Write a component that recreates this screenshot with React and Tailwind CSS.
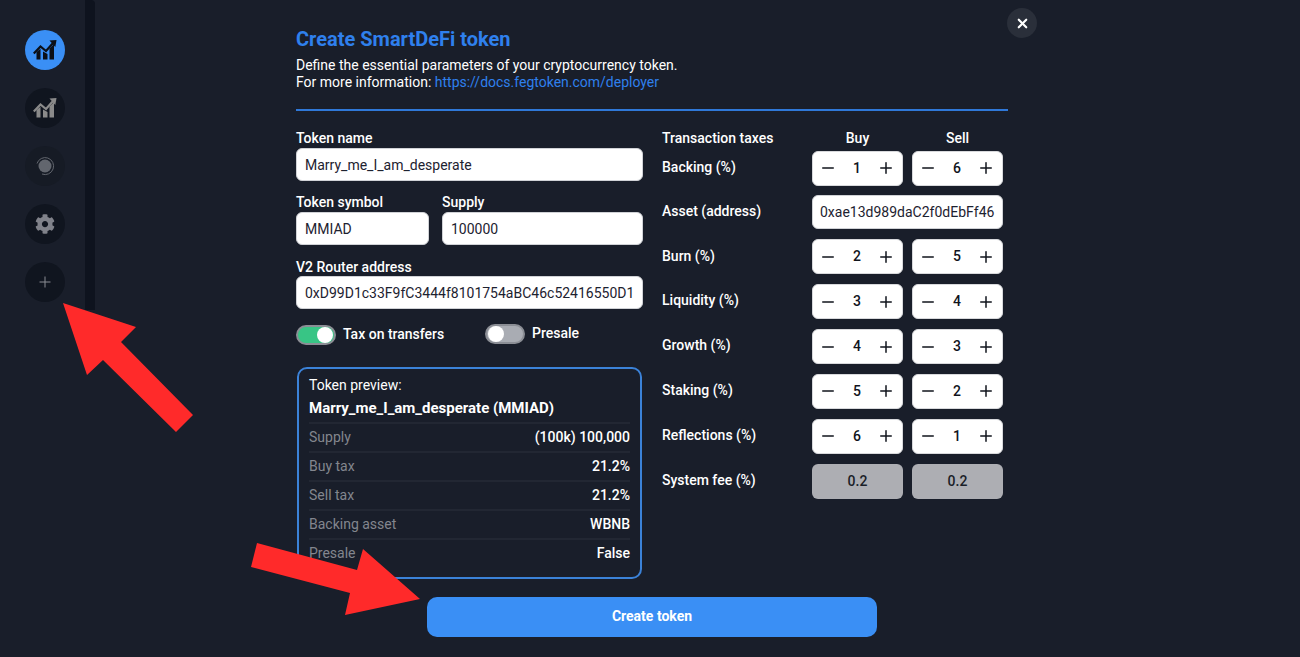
import { Minus, Plus, X } from "lucide-react";
import { FaCog } from "react-icons/fa";

const taxes = [
  { label: "Backing (%)", buy: 1, sell: 6 },
  { label: "Asset (address)", asset: "0xae13d989daC2f0dEbFf46" },
  { label: "Burn (%)", buy: 2, sell: 5 },
  { label: "Liquidity (%)", buy: 3, sell: 4 },
  { label: "Growth (%)", buy: 4, sell: 3 },
  { label: "Staking (%)", buy: 5, sell: 2 },
  { label: "Reflections (%)", buy: 6, sell: 1 },
];

const preview = [
  ["Supply", "(100k) 100,000"],
  ["Buy tax", "21.2%"],
  ["Sell tax", "21.2%"],
  ["Backing asset", "WBNB"],
  ["Presale", "False"],
];

function ChartIcon({ color }) {
  return (
    <svg width="24" height="24" viewBox="0 0 24 24" fill="none">
      <path d="M3.5 14l4-3.2V21.5h-4zM10 13.5l4.5 2.5v5.5H10zM16.5 10.5l4.5-4.5v15.5h-4.5z" fill={color} />
      <path d="M0.8 15.5L7.5 8.5l5.5 4.5 7.5-8.5" stroke={color} strokeWidth="2.2" />
      <path d="M16.5 2.5l7-.5-1.2 7z" fill={color} />
    </svg>
  );
}

function NavButton({ children, className = "bg-[#10151f]" }) {
  return (
    <div className={`flex h-10 w-10 items-center justify-center rounded-full ${className}`}>
      {children}
    </div>
  );
}

function Sidebar() {
  return (
    <div className="flex w-[85px] shrink-0 flex-col items-center gap-[18px] pt-[30px] pl-[5px]">
      <NavButton className="bg-[#3a8ff5]"><ChartIcon color="#0b0f17" /></NavButton>
      <NavButton><ChartIcon color="#8a8a8a" /></NavButton>
      <NavButton className="bg-[#161b25]">
        <svg width="22" height="22" viewBox="0 0 22 22" fill="none">
          <circle cx="11" cy="11" r="6.5" fill="#62666e" />
          <path d="M3 8.5A8.5 8.5 0 1 1 8 19" stroke="#62666e" strokeWidth="1" />
        </svg>
      </NavButton>
      <NavButton><FaCog size={20} color="#80828a" /></NavButton>
      <NavButton>
        <svg width="12" height="12" viewBox="0 0 12 12" fill="none">
          <path d="M6 .5v11M.5 6h11" stroke="#8a8d94" strokeWidth="1" />
        </svg>
      </NavButton>
    </div>
  );
}

function Field({ label, value, className = "", inputClass = "mt-[1px]" }) {
  return (
    <div className={className}>
      <div className="h-[17px] text-[14px] leading-[17px] font-medium text-white">{label}</div>
      <div className={`flex h-[33px] items-center overflow-hidden rounded-[6px] border border-[#d0d2d6] bg-white px-2 pt-[1px] text-[14px] whitespace-nowrap text-[#1d2230] ${inputClass}`}>
        {value}
      </div>
    </div>
  );
}

function Toggle({ on }) {
  return (
    <div className={`flex h-[20px] w-10 items-center rounded-full border-2 border-[#8b8e95] px-[1px] ${on ? "justify-end bg-[#38c585]" : "justify-start bg-[#a9acb3]"}`}>
      <div className="h-[16px] w-[16px] rounded-full bg-white" />
    </div>
  );
}

function Stepper({ value }) {
  return (
    <div className="flex h-[35px] w-[91px] items-center justify-between rounded-[6px] border border-[#d8d9dc] bg-white pr-[7px] pl-[6px] text-[14px] font-medium text-[#10141c]">
      <Minus size={18} strokeWidth={2} />
      <span>{value}</span>
      <Plus size={18} strokeWidth={2} />
    </div>
  );
}

function FeeBox() {
  return (
    <div className="flex h-[35px] w-[91px] items-center justify-center rounded-[6px] bg-[#adaeb3] text-[14px] font-medium text-[#1a1e28]">
      0.2
    </div>
  );
}

function TokenPreview() {
  return (
    <div className="mt-[22px] ml-[1px] h-[212px] w-[345px] rounded-[10px] border-2 border-[#3b82d8] px-[10px] pt-[7px]">
      <div className="h-[19px] text-[14px] leading-[19px] text-white">Token preview:</div>
      <div className="mt-[3px] h-[21px] text-[15px] leading-[21px] font-bold text-white">
        Marry_me_I_am_desperate (MMIAD)
      </div>
      <div className="mt-[3px]">
        {preview.map(([k, v]) => (
          <div key={k} className="flex h-[29px] items-center justify-between border-t-2 border-[#222733] text-[14px]">
            <span className="text-[#83868e]">{k}</span>
            <span className="font-medium text-white">{v}</span>
          </div>
        ))}
      </div>
    </div>
  );
}

function TaxTable() {
  return (
    <div className="w-[341px]">
      <div className="flex h-[17px] items-center text-[14px] font-medium text-white">
        <div className="w-[150px]">Transaction taxes</div>
        <div className="w-[91px] text-center">Buy</div>
        <div className="ml-[9px] w-[91px] text-center">Sell</div>
      </div>
      <div className="mt-[3.5px] flex flex-col gap-[9.9px]">
        {taxes.map(t => (
          <div key={t.label} className="flex items-center text-[14px] font-medium text-white">
            <div className="-mt-[1.5px] w-[150px]">{t.label}</div>
            {t.asset ? (
              <div className="flex h-[34px] w-[191px] items-center overflow-hidden rounded-[6px] border border-[#d0d2d6] bg-white pl-[7px] text-[14px] font-normal whitespace-nowrap text-[#1d2230]">
                {t.asset}
              </div>
            ) : (
              <div className="flex gap-[9px]">
                <Stepper value={t.buy} />
                <Stepper value={t.sell} />
              </div>
            )}
          </div>
        ))}
        <div className="flex items-center text-[14px] font-medium text-white">
          <div className="-mt-[1.5px] w-[150px]">System fee (%)</div>
          <div className="flex gap-[9px]">
            <FeeBox />
            <FeeBox />
          </div>
        </div>
      </div>
    </div>
  );
}

export default function App() {
  return (
    <div className="relative flex h-[657px] w-[1300px] overflow-hidden bg-[#191e2a] font-['Roboto',sans-serif]">
      <Sidebar />
      <div className="h-[310px] w-[10px] shrink-0 rounded-tr-[4px] bg-[#0e131e]" />

      <div className="ml-[201px] w-[712px] pt-[28px]">
        <h1 className="h-[23px] text-[20px] leading-[23px] font-bold text-[#2f80ed]">Create SmartDeFi token</h1>
        <p className="mt-[6px] text-[14px] leading-[17px] text-white">
          Define the essential parameters of your cryptocurrency token.
          <br />
          For more information: <span className="text-[#2f80ed]">https://docs.fegtoken.com/deployer</span>
        </p>
        <div className="mt-[18px] h-[2px] bg-[#2f78d8]" />

        <div className="mt-[19px] flex">
          <div className="w-[347px]">
            <Field label="Token name" value="Marry_me_I_am_desperate" />
            <div className="mt-[13px] flex gap-[13px]">
              <Field label="Token symbol" value="MMIAD" className="w-[133px]" />
              <Field label="Supply" value="100000" className="flex-1" />
            </div>
            <Field label="V2 Router address" value="0xD99D1c33F9fC3444f8101754aBC46c52416550D1" className="mt-[14px]" inputClass="mt-0" />
            <div className="mt-[15px] flex items-start">
              <div className="flex w-[189px] items-center gap-[7px] text-[14px] font-medium text-white">
                <Toggle on />
                <span>Tax on transfers</span>
              </div>
              <div className="-mt-[1px] flex items-center gap-[7px] text-[14px] font-medium text-white">
                <Toggle />
                <span>Presale</span>
              </div>
            </div>
            <TokenPreview />
          </div>
          <div className="ml-[19px]">
            <TaxTable />
          </div>
        </div>

        <button className="mt-[18px] ml-[131px] flex h-10 w-[450px] items-center justify-center rounded-[10px] bg-[#3a8ff5] pb-[1px] text-[14px] font-bold text-white">
          Create token
        </button>
      </div>

      {/* close button */}
      <div className="absolute top-[8px] left-[1007px] flex h-[30px] w-[30px] items-center justify-center rounded-full bg-[#2a2f3a] text-white">
        <X size={15} strokeWidth={3.5} />
      </div>

      {/* red annotation arrows */}
      <svg className="absolute top-0 left-0" width="1300" height="657" viewBox="0 0 1300 657">
        <polygon points="63,303 136,327 121,342 193,415 176,432 103,360 87,375" fill="#ff2a2a" />
        <polygon points="257,543 357,570 363,549 420,599 345,615 350,593 251,567" fill="#ff2a2a" />
      </svg>
    </div>
  );
}
